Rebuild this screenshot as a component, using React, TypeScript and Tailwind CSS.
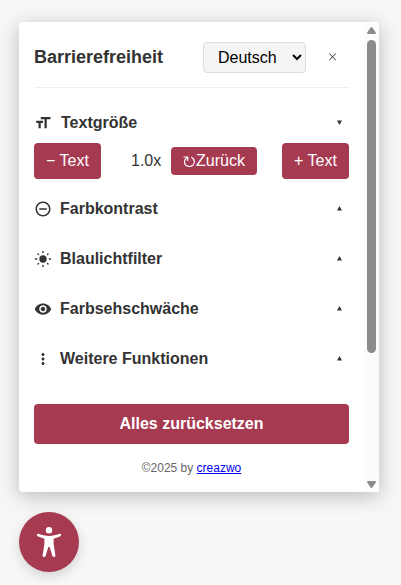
import React from "react";
import {
  MdFormatSize,
  MdRemoveCircleOutline,
  MdVisibility,
  MdMoreVert,
} from "react-icons/md";

type SectionProps = { icon: React.ReactNode; title: string; wide?: boolean; open?: boolean };

function Section({ icon, title, wide, open }: SectionProps) {
  return (
    <div className="flex h-[50px] items-center text-[#333]">
      <span className="flex w-[18px] shrink-0 justify-center">{icon}</span>
      <h3 className={`${wide ? "ml-[9px]" : "ml-2"} text-base font-bold leading-5`}>{title}</h3>
      <svg viewBox="0 0 5 5" className="mr-[7px] mb-px ml-auto size-[5px]" fill="#333">
        {open ? <path d="M0 .5h5L2.5 5z" /> : <path d="M0 4.500h5L2.500 0z" />}
      </svg>
    </div>
  );
}

function Sun() {
  return (
    <svg viewBox="0 0 18 18" className="size-[18px]" fill="#333" stroke="#333">
      <circle cx="9" cy="9" r="3.700" stroke="none" />
      <path
        d="M9 1.500v1M9 15.500v1M1.500 9h1.200M15.300 9h1.200M4 4l.5.5M13.500 13.500l.5.5M4 14l.5-.5M13.500 4.500l.5-.5"
        strokeWidth="1.400"
        strokeLinecap="round"
      />
    </svg>
  );
}

export default function App() {
  return (
    <main className="h-[585px] w-[401px] overflow-hidden bg-[#f7f7f7] pt-[22px] pl-[19px] font-['Liberation_Sans',Arial,sans-serif] text-[#333]">
      <section className="flex h-[470px] w-[360px] overflow-hidden rounded-l-[4px] bg-white shadow-[0_4px_20px_rgba(0,0,0,0.25)]">
        <div className="w-[345px] px-[15px]">
          <header className="flex h-[66px] items-center border-b border-[#eee] pt-[5px]">
            <h2 className="text-[18px] font-bold leading-5">Barrierefreiheit</h2>
            <select className="mr-[22px] ml-auto h-[31px] w-[103px] rounded-[4px] border border-[#ddd] bg-[#f5f5f5] pl-2.5 text-base text-black">
              <option>Deutsch</option>
            </select>
            <button aria-label="Schließen" className="mr-[12px] flex size-[9px] items-center justify-center">
              <svg viewBox="0 0 9 9" className="mb-px size-[9px]" stroke="#333" strokeWidth="1">
                <path d="M1.200 1.500l6.600 6.600M7.800 1.500L1.200 8.100" />
              </svg>
            </button>
          </header>
          <div className="pt-[10px]">
            <Section icon={<MdFormatSize size={18} />} title="Textgröße" wide open />
            <div className="-mt-[5px] flex h-9 items-center text-base text-white">
              <button className="h-9 w-[67px] rounded-[4px] bg-[#a63a50]">− Text</button>
              <span className="ml-[30px] w-10 text-[#333]">1.0x</span>
              <button className="flex h-7 w-[86px] items-center justify-center rounded-[4px] bg-[#a63a50] whitespace-nowrap">
                <svg viewBox="0 0 13 14" className="h-[14px] w-[13px]" fill="none" stroke="white" strokeWidth="1.200">
                  <path d="M.5 3h4.300v4M4.500 3.300C.8 5.800.9 9.300 2.800 11.200c1.900 1.700 5.200 1.700 7.100 0C12.200 9 11.900 5.300 8.300 3" />
                </svg>
                Zurück
              </button>
              <button className="ml-auto h-9 w-[67px] rounded-[4px] bg-[#a63a50]">+ Text</button>
            </div>
            <div className="pt-[5px]">
              <Section icon={<MdRemoveCircleOutline size={18} />} title="Farbkontrast" />
              <Section icon={<Sun />} title="Blaulichtfilter" />
              <Section icon={<MdVisibility size={18} />} title="Farbsehschwäche" />
              <Section icon={<MdMoreVert size={18} />} title="Weitere Funktionen" />
            </div>
          </div>
          <button className="mt-5 block h-10 w-full rounded-[4px] bg-[#a63a50] text-base font-bold text-white">
            Alles zurücksetzen
          </button>
          <p className="mt-4 text-center text-xs leading-4 text-[#666]">
            ©2025 by <a className="text-[#0000ee] underline">creazwo</a>
          </p>
        </div>
        <div className="flex w-[15px] flex-col items-center bg-[#fcfcfc] pt-[5px] pb-1">
          <svg viewBox="0 0 9 7" className="h-[7px] w-[9px]" fill="#8b8b8b"><path d="M3.7.5Q4.5-.5 5.3.5L8.8 5.5Q9.3 7 8 7H1Q-.3 7 .2 5.5z" /></svg>
          <div className="mt-[6px] h-[313px] w-[9px] rounded-full bg-[#8b8b8b]" />
          <svg viewBox="0 0 9 7" className="mt-auto h-[7px] w-[9px]" fill="#8b8b8b"><path d="M3.7 6.5Q4.5 7.5 5.3 6.5L8.8 1.500Q9.3 0 8 0H1Q-.3 0 .2 1.500z" /></svg>
        </div>
      </section>
      <button className="mt-5 flex size-[60px] items-center justify-center rounded-full bg-[#a63a50] shadow-[0_4px_12px_rgba(0,0,0,0.15)]">
        <svg viewBox="0 0 24 30" className="h-[30px] w-6" fill="white">
          <circle cx="12" cy="3.200" r="3.200" />
          <path d="M1.400 6.700C5 8 8.500 8.900 12 8.900s7-.9 10.600-2.200c1.500-.4 2.200 1.900.7 2.600-2.100.9-4.300 1.700-6.700 2.400V17l1.800 11.200c.3 2-2.600 2.500-3.100.6L12.700 20h-1.400l-2.600 8.800c-.5 1.900-3.400 1.400-3.100-.6L7.400 17v-5.300C5 11 2.800 10.200.7 9.300-.8 8.600-.1 6.300 1.400 6.700z" />
        </svg>
      </button>
    </main>
  );
}
